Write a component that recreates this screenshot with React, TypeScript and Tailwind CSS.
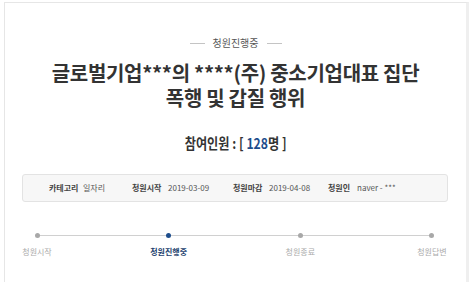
import React from "react";

const font = { fontFamily: '"Noto Sans CJK KR", "Noto Sans", sans-serif' };

export default function App() {
  const steps = [
    { label: "청원시작", active: false },
    { label: "청원진행중", active: true },
    { label: "청원종료", active: false },
    { label: "청원답변", active: false },
  ];
  return (
    <div className="w-[470px] h-[282px] bg-white overflow-hidden" style={font}>
      <div className="ml-[4px] mt-[2px] w-[465px] h-[290px] border-t border-l border-[#e6e6e6] border-r-[3px] border-r-[#efefef] bg-white">
        <div className="pt-[32px] h-[16px] box-content flex items-center justify-center gap-[8px]">
          <span className="w-[15px] h-px bg-[#c4c4c4]" />
          <span className="text-[10px] leading-[16px] text-[#555]">청원진행중</span>
          <span className="w-[15px] h-px bg-[#c4c4c4]" />
        </div>
        <h1 className="mt-[9px] text-center text-[20px] leading-[25px] font-bold text-[#333] tracking-[-0.3px]">
          글로벌기업***의 ****(주) 중소기업대표 집단
          <br />
          폭행 및 갑질 행위
        </h1>
        <div className="mt-[23px] flex justify-center">
          <div className="text-[14.5px] leading-[20px] font-bold text-[#333] scale-x-[0.84] whitespace-nowrap">
            참여인원 : [ <span className="text-[#1d4d8c]">128</span>명 ]
          </div>
        </div>
        <div className="mt-[21px] ml-[17px] mr-[18px] h-[28px] rounded-[3px] border border-[#e3e3e3] bg-[#f7f7f7] flex items-center pl-[26px] text-[8px] leading-[10px] text-[#555] whitespace-nowrap">
          <span className="w-[34px] font-bold text-[#444]">카테고리</span>
          <span className="w-[49px]">일자리</span>
          <span className="w-[36px] font-bold text-[#444]">청원시작</span>
          <span className="w-[65px]">2019-03-09</span>
          <span className="w-[36px] font-bold text-[#444]">청원마감</span>
          <span className="w-[59px]">2019-04-08</span>
          <span className="w-[29px] font-bold text-[#444]">청원인</span>
          <span>naver - ***</span>
        </div>
        <div className="relative mt-[31px] ml-[32px] mr-[34px] h-[40px]">
          <div className="absolute left-0 right-0 top-[2px] h-px bg-[#d0d0d0]" />
          <div className="relative flex justify-between">
            {steps.map((s, i) => (
              <div key={i} className="relative w-0 flex flex-col items-center">
                <span
                  className={
                    "w-[5px] h-[5px] rounded-full " +
                    (s.active ? "bg-[#1d4d8c]" : "bg-[#a8a8a8]")
                  }
                />
                <span
                  className={
                    "mt-[9px] whitespace-nowrap text-[8px] leading-[10px] " +
                    (s.active ? "font-bold text-[#1d3f6e]" : "text-[#aaa]")
                  }
                >
                  {s.label}
                </span>
              </div>
            ))}
          </div>
        </div>
      </div>
    </div>
  );
}
